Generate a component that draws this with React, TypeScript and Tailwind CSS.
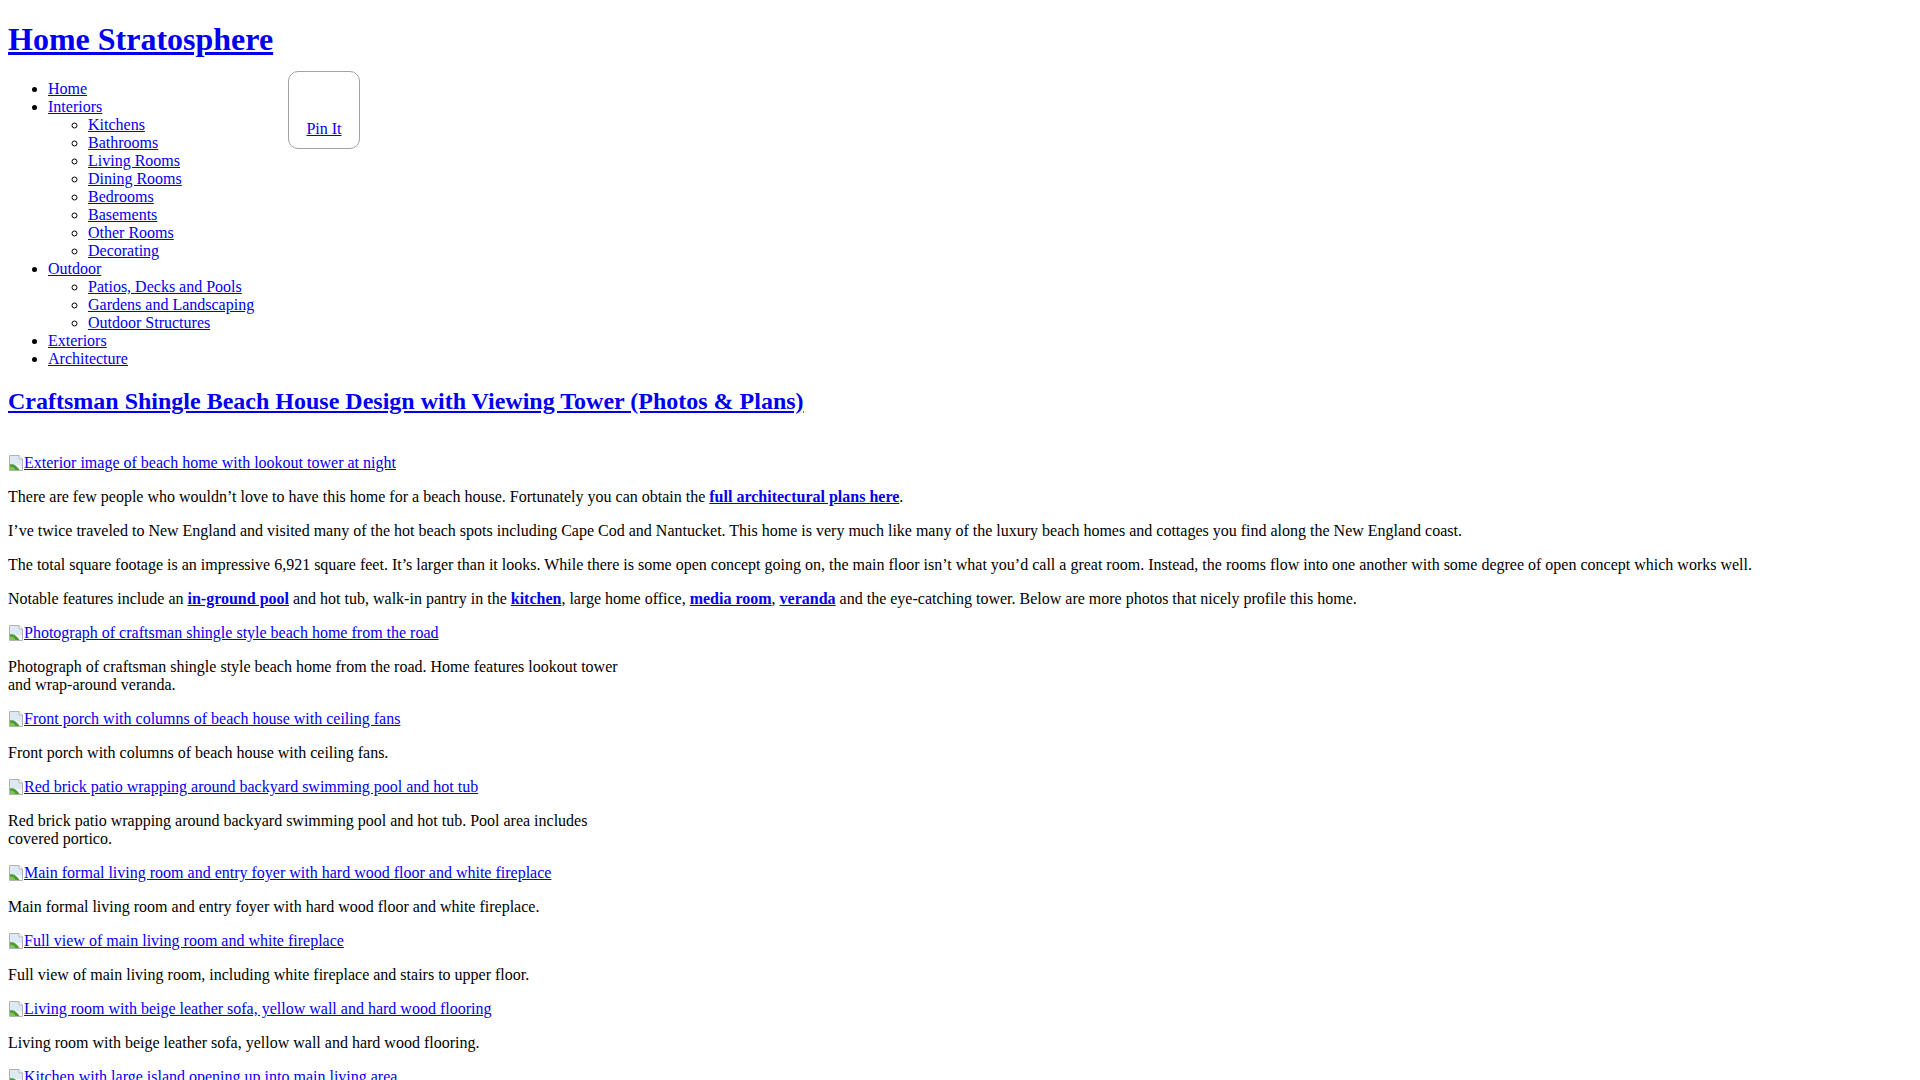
import React from "react";

type Photo = { alt: string; caption: string };

const NAV: { label: string; children?: string[] }[] = [
  { label: "Home" },
  {
    label: "Interiors",
    children: [
      "Kitchens",
      "Bathrooms",
      "Living Rooms",
      "Dining Rooms",
      "Bedrooms",
      "Basements",
      "Other Rooms",
      "Decorating",
    ],
  },
  {
    label: "Outdoor",
    children: ["Patios, Decks and Pools", "Gardens and Landscaping", "Outdoor Structures"],
  },
  { label: "Exteriors" },
  { label: "Architecture" },
];

const PHOTOS: Photo[] = [
  {
    alt: "Photograph of craftsman shingle style beach home from the road",
    caption:
      "Photograph of craftsman shingle style beach home from the road. Home features lookout tower and wrap-around veranda.",
  },
  {
    alt: "Front porch with columns of beach house with ceiling fans",
    caption: "Front porch with columns of beach house with ceiling fans.",
  },
  {
    alt: "Red brick patio wrapping around backyard swimming pool and hot tub",
    caption:
      "Red brick patio wrapping around backyard swimming pool and hot tub. Pool area includes covered portico.",
  },
  {
    alt: "Main formal living room and entry foyer with hard wood floor and white fireplace",
    caption: "Main formal living room and entry foyer with hard wood floor and white fireplace.",
  },
  {
    alt: "Full view of main living room and white fireplace",
    caption: "Full view of main living room, including white fireplace and stairs to upper floor.",
  },
  {
    alt: "Living room with beige leather sofa, yellow wall and hard wood flooring",
    caption: "Living room with beige leather sofa, yellow wall and hard wood flooring.",
  },
  {
    alt: "Kitchen with large island opening up into main living area",
    caption: "Kitchen with large island opening up into main living area.",
  },
];

const link = "text-[#0000ee] underline";

// stand-in for the browser's broken-image glyph
const BrokenImage: React.FC = () => (
  <svg width="16" height="16" viewBox="0 0 16 16" className="inline-block align-[-3px]">
    <path d="M1.5 0.5h9.5l3.5 3.5v11.5h-13z" fill="#f6f6f6" stroke="#b0b0b0" />
    <path d="M2 1h8.5v3.5H14V10H2z" fill="#dde9f3" />
    <path d="M11 0.5v3.5h3.5" fill="#ffffff" stroke="#b0b0b0" />
    <path d="M2 15V9.5C5 8.5 8.5 10 11.5 15z" fill="#4a9a30" />
    <path d="M2 15v-3C4 11.2 6 11.6 7.5 15z" fill="#7cc94a" />
  </svg>
);

const ImageLink: React.FC<{ alt: string; className?: string }> = ({ alt, className = "my-4" }) => (
  <p className={className}>
    <a href="#" className={link}>
      <BrokenImage />
      {alt}
    </a>
  </p>
);

export default function App() {
  return (
    <div className="relative min-h-screen bg-white px-2 pt-px pb-2 font-['Liberation_Serif',serif] text-[16px] leading-[18px] text-black">
      <h1 className="mt-[20.44px] mb-[21.44px] text-[32px] leading-[37px] font-bold">
        <a href="#" className={link}>
          Home Stratosphere
        </a>
      </h1>

      <ul className="mb-4 list-disc pl-10">
        {NAV.map((item) => (
          <li key={item.label}>
            <a href="#" className={link}>
              {item.label}
            </a>
            {item.children && (
              <ul className="list-[circle] pl-10">
                {item.children.map((c) => (
                  <li key={c}>
                    <a href="#" className={link}>
                      {c}
                    </a>
                  </li>
                ))}
              </ul>
            )}
          </li>
        ))}
      </ul>

      <div className="absolute top-[71px] left-[288px] flex h-[78px] w-[72px] items-end justify-center rounded-[10px] border border-[#a3a3a3] pb-[10px]">
        <a href="#" className={link}>
          Pin It
        </a>
      </div>

      <h2 className="my-[19.92px] text-[24px] leading-[27px] font-bold">
        <a href="#" className={link}>
          Craftsman Shingle Beach House Design with Viewing Tower (Photos &amp; Plans)
        </a>
      </h2>

      <ImageLink
        alt="Exterior image of beach home with lookout tower at night"
        className="mt-[39px] mb-4"
      />

      <p className="my-4">
        There are few people who wouldn’t love to have this home for a beach house. Fortunately you can
        obtain the{" "}
        <a href="#" className={`${link} font-bold`}>
          full architectural plans here
        </a>
        .
      </p>
      <p className="my-4">
        I’ve twice traveled to New England and visited many of the hot beach spots including Cape Cod and
        Nantucket. This home is very much like many of the luxury beach homes and cottages you find along the
        New England coast.
      </p>
      <p className="my-4">
        The total square footage is an impressive 6,921 square feet. It’s larger than it looks. While there is
        some open concept going on, the main floor isn’t what you’d call a great room. Instead, the rooms flow
        into one another with some degree of open concept which works well.
      </p>
      <p className="my-4">
        Notable features include an{" "}
        <a href="#" className={`${link} font-bold`}>
          in-ground pool
        </a>{" "}
        and hot tub, walk-in pantry in the{" "}
        <a href="#" className={`${link} font-bold`}>
          kitchen
        </a>
        , large home office,{" "}
        <a href="#" className={`${link} font-bold`}>
          media room
        </a>
        ,{" "}
        <a href="#" className={`${link} font-bold`}>
          veranda
        </a>{" "}
        and the eye-catching tower. Below are more photos that nicely profile this home.
      </p>

      {PHOTOS.map((p) => (
        <div key={p.alt} className="w-[625px]">
          <ImageLink alt={p.alt} />
          <p className="my-4">{p.caption}</p>
        </div>
      ))}
    </div>
  );
}
